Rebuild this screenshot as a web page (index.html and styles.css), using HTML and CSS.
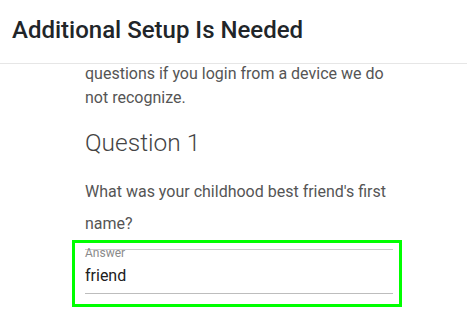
FILE: index.html
```html
<!DOCTYPE html>
<html lang="en">
<head>
<meta charset="utf-8">
<title>Additional Setup Is Needed</title>
<link rel="stylesheet" href="styles.css">
</head>
<body>
<header class="topbar">
  <h1 class="title">Additional Setup Is Needed</h1>
</header>
<main class="content">
  <p class="intro">questions if you login from a device we do not recognize.</p>
  <h2 class="question-title">Question 1</h2>
  <p class="question-text">What was your childhood best friend's first name?</p>
  <div class="field">
    <div class="field-inner">
      <label class="field-label" for="answer">Answer</label>
      <input class="field-input" id="answer" type="text" value="friend">
    </div>
  </div>
</main>
</body>
</html>
```
FILE: styles.css
```css
html, body {
  margin: 0;
  padding: 0;
  background: #ffffff;
}
body {
  font-family: Roboto, "Liberation Sans", Arial, sans-serif;
  width: 467px;
  height: 326px;
  overflow: hidden;
}
.topbar {
  box-sizing: border-box;
  height: 64px;
  padding: 16px 12px 0;
  border-bottom: 1px solid #e6e6e6;
}
.title {
  margin: 0;
  font-size: 24px;
  font-weight: 500;
  line-height: normal;
  color: #212529;
}
.content {
  box-sizing: border-box;
  width: 330px;
  margin-left: 72px;
}
.intro {
  margin: -2px 0 0;
  padding: 0 13px;
  font-size: 16px;
  line-height: 24px;
  color: #555555;
}
.question-title {
  margin: 19px 0 0;
  padding: 0 13px;
  font-size: 24.5px;
  font-weight: 300;
  line-height: 28.8px;
  color: #444444;
}
.question-text {
  margin: 18px 0 0;
  padding: 0 13px;
  font-size: 16px;
  line-height: 32px;
  color: #555555;
}
.field {
  box-sizing: border-box;
  width: 330px;
  height: 67px;
  border: 3px solid #00ff00;
  padding: 6px 6px 10px 10px;
}
.field-inner {
  border-top: 1px solid #cccccc;
  border-bottom: 1px solid #bdbdbd;
}
.field-label {
  display: block;
  margin-top: -2px;
  font-size: 12px;
  line-height: 11px;
  color: #8a8a8a;
}
.field-input {
  display: block;
  box-sizing: border-box;
  width: 100%;
  height: 34px;
  margin: 0;
  padding: 0;
  border: none;
  outline: none;
  background: transparent;
  font-family: Roboto, "Liberation Sans", Arial, sans-serif;
  font-size: 16px;
  line-height: 34px;
  color: #202020;
}
```
